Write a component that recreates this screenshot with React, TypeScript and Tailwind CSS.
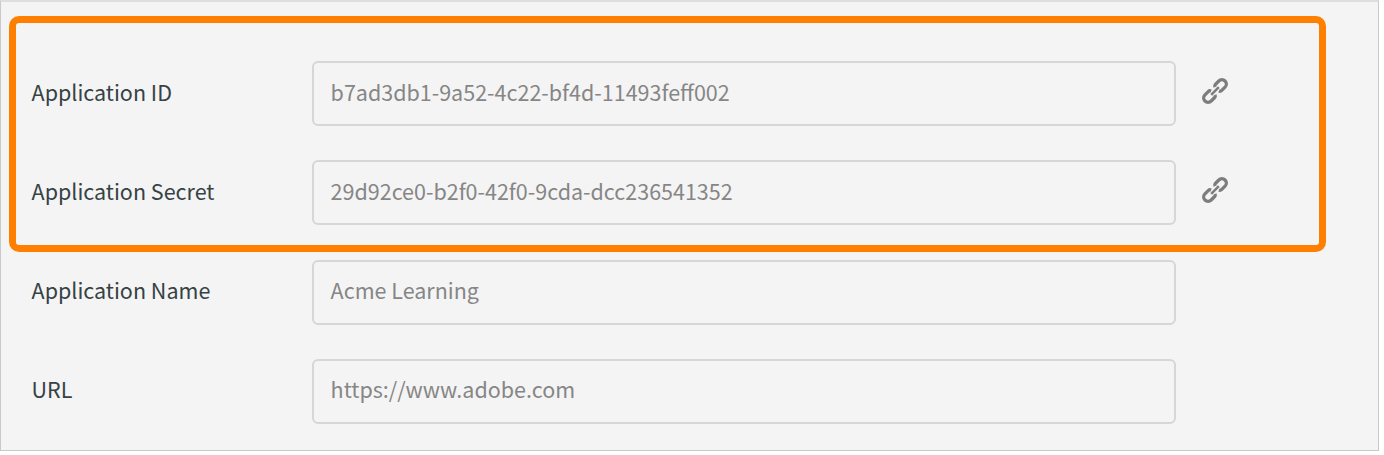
type Field = { label: string; value: string; linked?: boolean };

const fields: Field[] = [
  { label: "Application ID", value: "b7ad3db1-9a52-4c22-bf4d-11493feff002", linked: true },
  { label: "Application Secret", value: "29d92ce0-b2f0-42f0-9cda-dcc236541352", linked: true },
  { label: "Application Name", value: "Acme Learning" },
  { label: "URL", value: "https://www.adobe.com" },
];

function LinkIcon() {
  return (
    <svg viewBox="0 0 28 28" className="h-7 w-7" fill="none" stroke="#7d7d7d" strokeWidth="3.3">
      <g transform="rotate(-45 14 14)">
        <path d="M11.3 11.2Q10.6 9.6 8.8 9.6H4.2A4.4 4.4 0 0 0 4.2 18.4H8.8Q10.6 18.4 11.3 16.8" />
        <path d="M16.7 11.2Q17.4 9.6 19.2 9.6H23.8A4.4 4.4 0 0 1 23.8 18.4H19.2Q17.4 18.4 16.7 16.8" />
        <path d="M8.6 14H19.4" strokeWidth="2.5" />
      </g>
    </svg>
  );
}

function FieldRow({ label, value, linked }: Field) {
  return (
    <div className="flex h-[65px] items-center">
      <div className="w-[281px] shrink-0 pb-[4px] pl-[0.6px] text-[#364244]">{label}</div>
      <div className="flex h-[65px] w-[864px] shrink-0 items-center rounded-[6px] border-2 border-[#d6d6d6] pb-[4px] pl-[16.6px] text-[#868686]">
        {value}
      </div>
      {linked && (
        <button type="button" aria-label={label} className="mb-[6px] ml-[25px]">
          <LinkIcon />
        </button>
      )}
    </div>
  );
}

export default function App() {
  return (
    <div className="h-[455px] w-[1384px] bg-white">
      <main className="relative flex h-[451px] w-[1379px] flex-col gap-[34.2px] border border-t-2 border-[#c9c9c9] border-t-[#dedede] bg-[#f4f4f4] pl-[30px] pt-[59.2px] font-['Noto_Sans_CJK_JP','Noto_Sans',sans-serif] text-[21.5px] leading-[32px] whitespace-nowrap">
        {fields.map((field) => (
          <FieldRow key={field.label} {...field} />
        ))}
        <div className="pointer-events-none absolute left-[7.5px] top-[13.5px] h-[236px] w-[1317.5px] rounded-[10px] border-[7px] border-[#ff8000]" />
      </main>
    </div>
  );
}
